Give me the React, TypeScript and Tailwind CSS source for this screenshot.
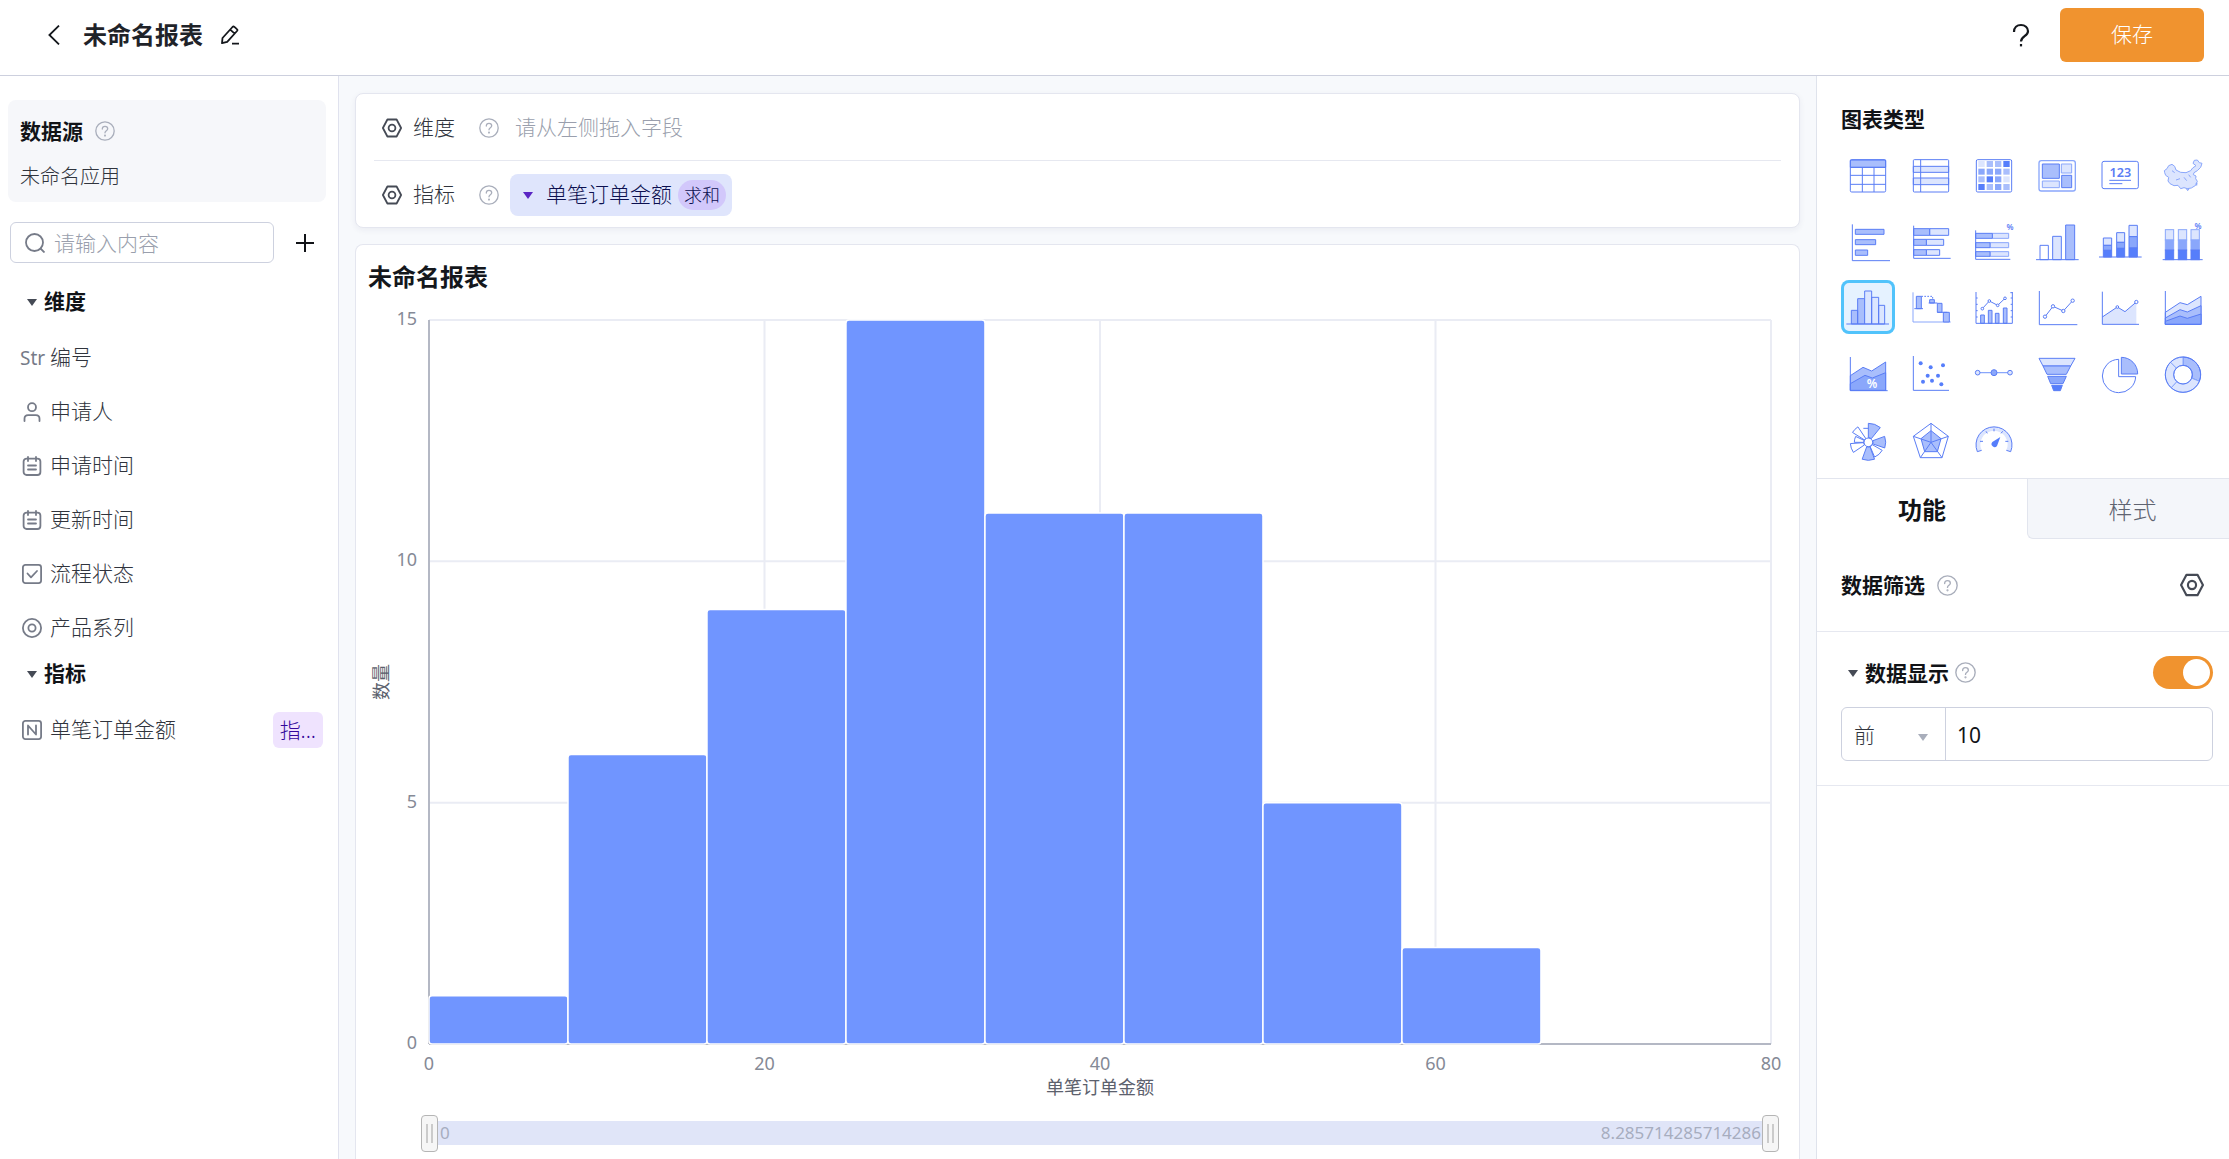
import { useState } from "react";
import type { ReactNode } from "react";
import clsx from "clsx";

const BLUE = "#5a7df5"
const PALE = "#dce5fe"
const SOFT = "#a9befc"
const MID = "#8aa7fb"
const DEEP = "#567efb"

function Caret({ className }: { className?: string }) {
    return (
        <svg viewBox="0 0 10 7" className={clsx("h-[7px] w-2.5 shrink-0", className)} fill="currentColor">
            <path d="M0 0h10L5 7z" />
        </svg>
    )
}

function HelpIcon({ className = "size-5" }: { className?: string }) {
    return (
        <svg viewBox="0 0 20 20" className={clsx("shrink-0 text-[#a9aebb]", className)} fill="none" stroke="currentColor" strokeWidth="1.3" strokeLinecap="round">
            <circle cx="10" cy="10" r="9.2" />
            <path d="M7.3 8.1c0-1.7 1.2-2.8 2.7-2.8s2.7 1.1 2.7 2.5c0 1.9-2.7 2-2.7 4" />
            <circle cx="10" cy="14.6" r=".4" fill="currentColor" />
        </svg>
    )
}

function HexIcon({ className = "size-5" }: { className?: string }) {
    return (
        <svg viewBox="0 0 20 20" className={clsx("shrink-0 text-[#454a55]", className)} fill="none" stroke="currentColor" strokeWidth="1.8" strokeLinejoin="round">
            <path d="M5.4 1.5h9.2l4.5 8.5-4.5 8.5H5.4L.9 10z" />
            <circle cx="10" cy="10" r="3.4" />
        </svg>
    )
}

function FieldIcon({ type }: { type: string }) {
    return (
        <svg viewBox="0 0 20 20" className="size-5 shrink-0 text-[#767b88]" fill="none" stroke="currentColor" strokeWidth="1.8" strokeLinecap="round" strokeLinejoin="round">
            {type === "user" && (
                <>
                    <circle cx="10" cy="5.2" r="4" />
                    <path d="M2.5 19v-2.2c0-2 1.5-3.6 3.6-3.6h7.8c2.1 0 3.6 1.6 3.6 3.6V19" />
                </>
            )}
            {type === "date" && (
                <>
                    <rect x="1.6" y="2.6" width="16.8" height="16.4" rx="3" />
                    <path d="M6 1v4M14 1v4M6 9.5h8M6 13.5h8" />
                </>
            )}
            {type === "check" && (
                <>
                    <rect x=".9" y=".9" width="18.2" height="18.2" rx="2.5" />
                    <path d="M5.5 9.5l3.5 3.8 6-6.3" />
                </>
            )}
            {type === "radio" && (
                <>
                    <circle cx="10" cy="10" r="9.1" />
                    <circle cx="10" cy="10" r="3.6" />
                </>
            )}
            {type === "number" && (
                <>
                    <rect x=".9" y=".9" width="18.2" height="18.2" rx="2.5" />
                    <path d="M6 14.5V5.5l8 9v-9" />
                </>
            )}
        </svg>
    )
}

// polar wedge, degrees clockwise from the top
function wedge(cx: number, cy: number, r0: number, r1: number, from: number, to: number) {
    const point = (r: number, deg: number) => {
        const a = ((deg - 90) * Math.PI) / 180
        return `${(cx + r * Math.cos(a)).toFixed(1)} ${(cy + r * Math.sin(a)).toFixed(1)}`
    }
    const large = to - from > 180 ? 1 : 0
    return `M${point(r0, from)}L${point(r1, from)}A${r1} ${r1} 0 ${large} 1 ${point(r1, to)}L${point(r0, to)}A${r0} ${r0} 0 ${large} 0 ${point(r0, from)}Z`
}

const heat = [
    [PALE, SOFT, SOFT, DEEP],
    [MID, MID, MID, SOFT],
    [SOFT, DEEP, MID, PALE],
    [DEEP, SOFT, MID, SOFT],
]

const chartTypes: { name: string; icon: ReactNode }[] = [
    {
        name: "明细表",
        icon: (
            <>
                <path d="M28 36h106v22H28z" fill={SOFT} />
                <rect x="28" y="35" width="106" height="97" rx="4" />
                <path d="M28 58h106M28 82h106M28 109h106M64 58v74M99 58v74" />
            </>
        ),
    },
    {
        name: "透视表",
        icon: (
            <>
                <path d="M28 55h106v18H28zM28 90h106v20H28z" fill={PALE} />
                <rect x="28" y="35" width="106" height="97" rx="3" />
                <path d="M50 35v97" />
            </>
        ),
    },
    {
        name: "热力图",
        icon: (
            <>
                <rect x="28" y="35" width="106" height="97" rx="4" />
                {heat.map((row, r) =>
                    row.map((fill, c) => (
                        <rect key={`${r}-${c}`} x={34 + c * 25} y={39 + r * 23} width="19" height="18" fill={fill} stroke="none" />
                    ))
                )}
            </>
        ),
    },
    {
        name: "矩形树图",
        icon: (
            <>
                <rect x="27" y="38" width="109" height="91" rx="7" stroke={MID} strokeWidth="4" />
                <path d="M37 48h51v43H37zM95 82h30v37H95z" fill={SOFT} />
                <path d="M94 48h31v27H94zM37 99h51v20H37z" fill={PALE} stroke={MID} />
            </>
        ),
    },
    {
        name: "指标卡",
        icon: (
            <>
                <rect x="27" y="40" width="109" height="82" rx="6" />
                <text x="82" y="88" textAnchor="middle" fontSize="38" fontWeight="600" fill={BLUE} stroke="none">123</text>
                <path d="M49 97h65M49 107h39" />
            </>
        ),
    },
    {
        name: "地图",
        icon: (
            <>
                <path
                    d="M25 68L33 62L38 53L48 49L56 55L60 66L74 73L90 74L104 68L110 60L120 53L111 46L115 37L124 36L130 44L138 46L134 58L124 68L114 74L112 80L120 84L119 92L124 100L119 112L106 120L94 122L84 119L74 122L66 112L54 113L42 107L36 99L38 88L29 82L26 74Z"
                    fill={PALE}
                    stroke={MID}
                />
                <path d="M92 123l3 5 4-5zM120 106l2 6 1-7zM48 68l8 6M60 96l12-4M84 88l8 10M98 80l6 8" stroke={MID} />
            </>
        ),
    },
    {
        name: "条形图",
        icon: (
            <>
                <path d="M43 46h86v15H43zM43 77h61v15H43zM43 108h37v16H43z" fill={SOFT} />
                <path d="M34 31v109h113" />
            </>
        ),
    },
    {
        name: "堆积条形图",
        icon: (
            <>
                <path d="M77 44h57v20H77zM67 76h52v18H67zM67 107h40v17H67z" fill={PALE} />
                <path d="M29 44h48v20H29zM29 76h38v18H29zM29 107h38v17H29z" fill={SOFT} />
                <path d="M29 35v98h111" />
            </>
        ),
    },
    {
        name: "百分比条形图",
        icon: (
            <>
                <path d="M76 58h49v15H76zM69 86h56v15H69zM69 113h56v14H69z" fill={PALE} stroke={MID} />
                <path d="M26 58h50v15H26zM26 86h43v15H26zM26 113h43v14H26z" fill={SOFT} />
                <path d="M26 49v87h104" />
                <text x="129" y="47" textAnchor="middle" fontSize="24" fontWeight="600" fill={BLUE} stroke="none">%</text>
            </>
        ),
    },
    {
        name: "柱状图",
        icon: (
            <>
                <path d="M30 94h25v43H30z" />
                <path d="M68 67h26v70H68z" fill={PALE} />
                <path d="M107 33h27v104h-27z" fill={SOFT} />
                <path d="M18 137h128" />
            </>
        ),
    },
    {
        name: "堆积柱状图",
        icon: (
            <>
                <path d="M31 72h25v22H31zM71 56h24v29H71zM108 34h25v34h-25z" fill={PALE} />
                <path d="M31 94h25v15H31zM71 85h24v18H71zM108 68h25v34h-25z" fill={MID} />
                <path d="M31 109h25v20H31zM71 103h24v26H71zM108 102h25v27h-25z" fill={DEEP} />
                <path d="M18 129h128" />
            </>
        ),
    },
    {
        name: "百分比柱状图",
        icon: (
            <>
                {[28, 67, 105].map((x) => (
                    <g key={x}>
                        <rect x={x} y="47" width="25" height="31" fill={PALE} stroke={MID} />
                        <rect x={x} y="78" width="25" height="30" fill={MID} stroke={MID} />
                        <rect x={x} y="108" width="25" height="29" fill={DEEP} />
                    </g>
                ))}
                <path d="M20 137h120" />
                <text x="126" y="45" textAnchor="middle" fontSize="24" fontWeight="600" fill={BLUE} stroke="none">%</text>
            </>
        ),
    },
    {
        name: "直方图",
        icon: (
            <>
                <path d="M31 91h19v41H31zM50 56h21v76H50z" fill={SOFT} />
                <path d="M71 33h21v99H71zM92 52h21v80H92zM113 76h18v56h-18z" fill="#dbe6ff" />
                <path d="M16 132h128" />
            </>
        ),
    },
    {
        name: "瀑布图",
        icon: (
            <>
                <path d="M27 37v89h113" stroke={MID} />
                <path d="M37 49h15v37H37zM77 59h14v10H77zM100 70h14v27h-14zM118 97h18v29h-18z" fill={SOFT} />
                <path d="M31 86h26M74 69h26M100 97h30" />
                <path d="M52 49h34v10" strokeDasharray="5 4" />
            </>
        ),
    },
    {
        name: "双轴图",
        icon: (
            <>
                <path d="M41 105h11v25H41zM64 91h11v39H64zM85 100h11v30H85zM109 84h11v46h-11z" fill={SOFT} />
                <path d="M27 36v94h109V36M27 54h5M27 73h5M27 92h5M27 111h5M136 38h-6M136 54h-5M136 73h-5M136 92h-5M136 111h-5" />
                <path d="M46 86l21-23 25 13 22-21" />
                <g fill="white">
                    <circle cx="46" cy="86" r="4" />
                    <circle cx="67" cy="63" r="4" />
                    <circle cx="92" cy="76" r="4" />
                    <circle cx="114" cy="55" r="4" />
                </g>
            </>
        ),
    },
    {
        name: "折线图",
        icon: (
            <>
                <path d="M28 33v101h114M45 110l24-31 31 14 28-31" />
                <g fill="white">
                    <circle cx="45" cy="110" r="5" />
                    <circle cx="69" cy="79" r="5" />
                    <circle cx="100" cy="93" r="5" />
                    <circle cx="128" cy="62" r="5" />
                </g>
            </>
        ),
    },
    {
        name: "面积图",
        icon: (
            <>
                <path d="M28 111l45-30 23 14 34-29v67H28z" fill={PALE} stroke="none" />
                <path d="M28 35v98h110M28 111l45-30 23 14 34-29" />
                <circle cx="73" cy="81" r="4" fill="white" />
                <circle cx="130" cy="66" r="5" fill="white" />
            </>
        ),
    },
    {
        name: "堆积面积图",
        icon: (
            <>
                <path d="M28 97l44-29 22 6 41-25v84H28z" fill={PALE} />
                <path d="M28 114l44-25 22 7 41-19v56H28z" fill={SOFT} />
                <path d="M28 124l44-16 22 7 41-13v31H28z" fill={MID} />
                <path d="M28 33v100h108" />
            </>
        ),
    },
    {
        name: "百分比面积图",
        icon: (
            <>
                <path d="M28 89l38-25 26 11 42-27v85H28z" fill={SOFT} />
                <path d="M28 113l44-25 22 8 40-16v53H28z" fill={MID} />
                <path d="M28 33v101h112" />
                <text x="93" y="125" textAnchor="middle" fontSize="36" fontWeight="600" fill="white" stroke="none">%</text>
            </>
        ),
    },
    {
        name: "散点图",
        icon: (
            <>
                <path d="M28 30v103h107" />
                {[[50, 52], [80, 64], [117, 58], [71, 89], [102, 89], [57, 107], [84, 104], [112, 115]].map(([x, y]) => (
                    <circle key={`${x}-${y}`} cx={x} cy={y} r="6" fill={DEEP} stroke="none" />
                ))}
            </>
        ),
    },
    {
        name: "时间轴",
        icon: (
            <>
                <path d="M32 80h97" stroke={MID} strokeWidth="4" />
                <circle cx="32" cy="80" r="7" fill={PALE} />
                <circle cx="81" cy="80" r="9" fill={MID} />
                <circle cx="129" cy="80" r="7" fill={PALE} />
            </>
        ),
    },
    {
        name: "漏斗图",
        icon: (
            <>
                <path d="M27 37h108l-13 23H39z" fill={PALE} />
                <path d="M39 60h83l-13 25H51z" fill={SOFT} />
                <path d="M53 91h56l-10 22H62z" fill={MID} />
                <path d="M65 118h32l-6 16H71z" fill={DEEP} />
            </>
        ),
    },
    {
        name: "饼图",
        icon: (
            <>
                <path d="M77 40a50 50 0 1 0 51 52H77z" />
                <path d="M85 34a49 49 0 0 1 49 50H85z" fill={SOFT} />
            </>
        ),
    },
    {
        name: "环形图",
        icon: (
            <>
                <path d={wedge(81, 86, 28, 53, 0, 112)} fill={SOFT} />
                <path d={wedge(81, 86, 28, 53, 112, 222)} fill={PALE} stroke={MID} />
                <path d={wedge(81, 86, 28, 53, 222, 315)} fill={PALE} stroke={MID} />
                <path d={wedge(81, 86, 28, 53, 315, 360)} fill={PALE} stroke={MID} />
                <circle cx="81" cy="86" r="53" />
                <circle cx="81" cy="86" r="28" />
            </>
        ),
    },
    {
        name: "玫瑰图",
        icon: (
            <>
                <path d={wedge(82, 91, 14, 57, 0, 39)} fill={SOFT} />
                <path d={wedge(82, 91, 14, 52, 70, 109)} fill={SOFT} />
                <path d={wedge(82, 91, 14, 48, 120, 157)} />
                <path d={wedge(82, 91, 14, 54, 160, 200)} fill={SOFT} />
                <path d={wedge(82, 91, 14, 54, 236, 266)} />
                <path d={wedge(82, 91, 14, 42, 270, 295)} />
                <path d={wedge(82, 91, 14, 56, 302, 326)} />
                <path d="M82 49H67" />
                <circle cx="82" cy="91" r="13" />
            </>
        ),
    },
    {
        name: "雷达图",
        icon: (
            <>
                <path d="M81 34l52 39-19 64H49L28 73z" />
                <path d="M81 56l30 24-11 39H62L51 80z" fill={SOFT} />
                <path d="M81 34v57l52-18M81 91l33 46M81 91l-32 46M81 91L28 73" />
            </>
        ),
    },
    {
        name: "仪表盘",
        icon: (
            <>
                <path d="M31 119a54 54 0 1 1 100 0l-13-4a41 41 0 1 0-74 0z" fill={PALE} stroke="none" />
                <path d="M44 115l-13 4a54 54 0 1 1 100 0l-13-4" />
                <path d="M81 50v8M57 58l4 6M107 58l-5 6M39 88h9M115 88h9" />
                <path d="M100 75l-10 27a9 9 0 1 1-14-12z" fill={DEEP} stroke="none" />
            </>
        ),
    },
]

const dimensions = [
    { type: "user", label: "申请人" },
    { type: "date", label: "申请时间" },
    { type: "date", label: "更新时间" },
    { type: "check", label: "流程状态" },
    { type: "radio", label: "产品系列" },
]

const counts = [1, 6, 9, 15, 11, 11, 5, 2]
const BIN = 8.285714285714286
const X_MAX = 80
const Y_MAX = 15

function Header() {
    return (
        <header className="flex h-[76px] shrink-0 items-center border-b border-[#cdd0de] bg-white pr-[25px] pb-1.5 pl-12">
            <button aria-label="返回" className="text-[#14171c]">
                <svg viewBox="0 0 12 20" className="h-5 w-3" fill="none" stroke="currentColor" strokeWidth="1.8">
                    <path d="M11 .6L1.4 10l9.6 9.4" />
                </svg>
            </button>
            <h1 className="ml-[23px] text-2xl font-bold text-[#1f2329]">未命名报表</h1>
            <button aria-label="编辑名称" className="ml-[17px] text-[#14171c]">
                <svg viewBox="0 0 20 20" className="size-5" fill="none" stroke="currentColor" strokeWidth="1.8" strokeLinejoin="round">
                    <path d="M2 18.2l.5-5.2L12.5 2c.6-.6 1.3-.6 1.9-.1l2.5 2.2c.6.5.6 1.3.1 1.9L7.2 16.8zM10.2 4.6l4.5 4M12 18.6h7" />
                </svg>
            </button>
            <button aria-label="帮助" className="ml-auto text-[#14171c]">
                <svg viewBox="0 0 18 24" className="h-6 w-[18px]" fill="none" stroke="currentColor" strokeWidth="2.2">
                    <path d="M2 9c0-4.4 3-7 7-7s7 2.6 7 6.2c0 4.8-7 5.2-7 10.3" />
                    <path d="M9 21v2.4" />
                </svg>
            </button>
            <button className="ml-[30px] h-[54px] w-36 rounded-md bg-[#f0932f] text-[21px] text-white">保存</button>
        </header>
    )
}

function FieldPanel() {
    return (
        <aside className="flex w-[339px] shrink-0 flex-col border-r border-[#e0e2ee] bg-white">
            <div className="mt-6 mr-3 ml-2 h-[102px] rounded-lg bg-[#f6f7fa] px-3 pt-[15px]">
                <div className="flex items-center gap-3">
                    <h2 className="text-[21px] leading-8 font-bold">数据源</h2>
                    <HelpIcon />
                </div>
                <p className="mt-3.5 text-[20px] leading-8 text-[#30343d]">未命名应用</p>
            </div>
            <div className="mt-5 flex items-center pr-6 pl-2.5">
                <label className="flex h-[41px] flex-1 items-center rounded-md border border-[#cdd1df] pl-3.5">
                    <svg viewBox="0 0 20 20" className="size-5 text-[#767b88]" fill="none" stroke="currentColor" strokeWidth="1.8">
                        <circle cx="9.5" cy="9.5" r="8.5" />
                        <path d="M15.5 15.5l4 4" />
                    </svg>
                    <input aria-label="搜索字段" placeholder="请输入内容" className="ml-[9px] w-0 flex-1 text-[21px] leading-8 outline-none placeholder:text-[#9a9fad]" />
                </label>
                <button aria-label="新增字段" className="ml-[22px]">
                    <svg viewBox="0 0 18 18" className="size-[18px]" stroke="currentColor" strokeWidth="2">
                        <path d="M9 0v18M0 9h18" />
                    </svg>
                </button>
            </div>
            <h3 className="mt-[23px]">
                <button className="flex h-8 items-center gap-[7px] pl-[27px] text-[21px] font-bold">
                    <Caret className="text-[#454a55]" />
                    维度
                </button>
            </h3>
            <ul className="mt-[13px] text-[21px] text-[#30343d]">
                <li className="flex h-[54px] items-center pl-5">
                    <span className="w-[30px] text-[19px] font-normal text-[#767b88]">Str</span>
                    编号
                </li>
                {dimensions.map((field) => (
                    <li key={field.label} className="flex h-[54px] items-center gap-2 pl-[22px]">
                        <FieldIcon type={field.type} />
                        {field.label}
                    </li>
                ))}
            </ul>
            <h3 className="mt-[3px]">
                <button className="flex h-8 items-center gap-[7px] pl-[27px] text-[21px] font-bold">
                    <Caret className="text-[#454a55]" />
                    指标
                </button>
            </h3>
            <ul className="mt-[13px] text-[21px] text-[#30343d]">
                <li className="flex h-[54px] items-center gap-2 pr-[15px] pl-[22px]">
                    <FieldIcon type="number" />
                    单笔订单金额
                    <span className="ml-auto rounded-md bg-[#efe3fe] px-[7px] text-[21px] leading-9 text-[#33089c]">指...</span>
                </li>
            </ul>
        </aside>
    )
}

function DropRow({ label, children }: { label: string; children: ReactNode }) {
    return (
        <div className="flex h-[66px] items-center pt-0.5 pl-2">
            <HexIcon />
            <span className="ml-[11px] text-[21px] text-[#30343d]">{label}</span>
            <HelpIcon className="ml-6 size-5" />
            {children}
        </div>
    )
}

function Histogram() {
    return (
        <svg className="block h-[724px] w-full overflow-visible">
            {[5, 10, 15].map((v) => (
                <line key={v} x1="0" x2="100%" y1={`${100 - (v / Y_MAX) * 100}%`} y2={`${100 - (v / Y_MAX) * 100}%`} stroke="#eaecf4" strokeWidth="2" />
            ))}
            {[20, 40, 60, 80].map((v) => (
                <line key={v} x1={`${(v / X_MAX) * 100}%`} x2={`${(v / X_MAX) * 100}%`} y1="0" y2="100%" stroke="#eaecf4" strokeWidth="2" />
            ))}
            <line x1="0" x2="0" y1="0" y2="100%" stroke="#b4b8c4" strokeWidth="2" />
            <line x1="0" x2="100%" y1="100%" y2="100%" stroke="#b4b8c4" strokeWidth="2" />
            {counts.map((n, i) => (
                <rect
                    key={i}
                    x={`${((i * BIN) / X_MAX) * 100}%`}
                    y={`${100 - (n / Y_MAX) * 100}%`}
                    width={`${(BIN / X_MAX) * 100}%`}
                    height={`${(n / Y_MAX) * 100}%`}
                    rx="3"
                    fill="#7095ff"
                    stroke="white"
                    strokeWidth="1.5"
                />
            ))}
            <g fontSize="18" fontWeight="400" fill="#858a96">
                {[0, 5, 10, 15].map((v) => (
                    <text key={v} x="-12" y={`${100 - (v / Y_MAX) * 100}%`} dy="5" textAnchor="end">{v}</text>
                ))}
                {[0, 20, 40, 60, 80].map((v) => (
                    <text key={v} x={`${(v / X_MAX) * 100}%`} y="100%" dy="26" textAnchor="middle">{v}</text>
                ))}
            </g>
            <g fontSize="18" fontWeight="400" fill="#5c616d">
                <text x="50%" y="100%" dy="50" textAnchor="middle">单笔订单金额</text>
                <text x="-362" y="-41" transform="rotate(-90)" textAnchor="middle">数量</text>
            </g>
        </svg>
    )
}

function RangeHandle({ label, value, onChange }: { label: string; value: number; onChange: (v: number) => void }) {
    return (
        <input
            type="range"
            aria-label={label}
            min={0}
            max={100}
            value={value}
            onChange={(e) => onChange(Number(e.target.value))}
            className="pointer-events-none absolute -inset-x-2 -top-1.5 h-[37px] appearance-none bg-transparent [&::-webkit-slider-thumb]:pointer-events-auto [&::-webkit-slider-thumb]:h-[37px] [&::-webkit-slider-thumb]:w-[17px] [&::-webkit-slider-thumb]:appearance-none [&::-webkit-slider-thumb]:rounded [&::-webkit-slider-thumb]:border [&::-webkit-slider-thumb]:border-[#b5b5b5] [&::-webkit-slider-thumb]:bg-[#f6f6f6] [&::-webkit-slider-thumb]:bg-[linear-gradient(90deg,transparent_4px,#cbcbcb_4px,#cbcbcb_6px,transparent_6px,transparent_9px,#cbcbcb_9px,#cbcbcb_11px,transparent_11px)] [&::-webkit-slider-thumb]:bg-[length:100%_19px] [&::-webkit-slider-thumb]:bg-center [&::-webkit-slider-thumb]:bg-no-repeat"
        />
    )
}

function DataZoom() {
    const [start, setStart] = useState(0)
    const [end, setEnd] = useState(100)
    return (
        <div className="relative mt-[77px] flex h-6 items-center justify-between bg-[#e0e5f8] pr-2.5 pl-[11px] text-[17px] font-normal text-[#a7adbf]">
            <span>0</span>
            <span>{BIN}</span>
            <RangeHandle label="起始" value={start} onChange={setStart} />
            <RangeHandle label="结束" value={end} onChange={setEnd} />
        </div>
    )
}

function Workspace() {
    return (
        <main className="flex min-w-0 flex-1 flex-col gap-4 overflow-hidden bg-[#f7f9fc] px-4 pt-[17px]">
            <section className="shrink-0 rounded-lg border border-[#e4e6ef] bg-white px-[18px] shadow-[0_2px_6px_rgba(30,40,80,0.06)]">
                <DropRow label="维度">
                    <span className="ml-4 text-[21px] text-[#9a9fad]">请从左侧拖入字段</span>
                </DropRow>
                <hr className="border-[#e6e8f0]" />
                <DropRow label="指标">
                    <button className="ml-[11px] flex h-[42px] items-center rounded-lg bg-[#dfe5fc] pr-1.5 pl-[13px] text-[#0c1050]">
                        <Caret className="text-[#5a25c4]" />
                        <span className="ml-[13px] text-[21px]">单笔订单金额</span>
                        <span className="ml-1.5 rounded-full bg-[#d2c8fb] px-1.5 text-lg leading-[30px]">求和</span>
                    </button>
                </DropRow>
            </section>
            <section className="flex-1 shrink-0 rounded-t-lg border border-b-0 border-[#e4e6ef] bg-white pr-7 pb-6 pl-[73px]">
                <h2 className="mt-4 mb-[27px] -ml-[61px] text-2xl font-bold text-[#14171c]">未命名报表</h2>
                <Histogram />
                <DataZoom />
            </section>
        </main>
    )
}

function SettingsPanel() {
    const [selected, setSelected] = useState("直方图")
    const [showData, setShowData] = useState(true)
    return (
        <aside className="w-[413px] shrink-0 border-l border-[#dfe3ec] bg-white">
            <div className="px-6">
                <h2 className="pt-[27px] text-[21px] leading-8 font-bold">图表类型</h2>
                <div className="mt-[13px] -mr-3.5 grid grid-cols-6 gap-y-3 pb-3">
                    {chartTypes.map((chart) => (
                        <button
                            key={chart.name}
                            aria-label={chart.name}
                            aria-pressed={chart.name === selected}
                            onClick={() => setSelected(chart.name)}
                            className={clsx(
                                "size-[54px] rounded-lg",
                                chart.name === selected && "bg-[#e5f2ff] ring-3 ring-[#51c3fb] ring-inset"
                            )}
                        >
                            <svg viewBox="0 0 162 162" className="size-full" fill="none" stroke={BLUE} strokeWidth="3">
                                {chart.icon}
                            </svg>
                        </button>
                    ))}
                </div>
            </div>
            <div role="tablist" className="flex h-[61px] border-t border-[#e2e5ee] text-2xl">
                <button role="tab" aria-selected className="w-[210px] pt-0.5 font-bold">功能</button>
                <button role="tab" aria-selected={false} className="flex-1 rounded-bl-md border-b border-l border-[#e2e5ee] bg-[#f4f6fa] pt-0.5 pl-2 text-[#5f6471]">样式</button>
            </div>
            <div className="flex h-[93px] items-center border-b border-[#e6e8f0] pr-[25px] pl-6">
                <h3 className="pt-0.5 text-[21px] font-bold">数据筛选</h3>
                <HelpIcon className="ml-3 size-[21px]" />
                <button aria-label="筛选设置" className="ml-auto">
                    <HexIcon className="size-6" />
                </button>
            </div>
            <div className="h-[154px] border-b border-[#e6e8f0] pt-6 pr-4 pl-6">
                <div className="flex h-[33px] items-center">
                    <button className="flex items-center gap-[7px] pt-0.5 pl-[7px] text-[21px] font-bold">
                        <Caret className="text-[#454a55]" />
                        数据显示
                    </button>
                    <HelpIcon className="ml-1.5 size-[21px]" />
                    <input
                        type="checkbox"
                        role="switch"
                        aria-label="数据显示"
                        checked={showData}
                        onChange={(e) => setShowData(e.target.checked)}
                        className="ml-auto h-[33px] w-[60px] appearance-none rounded-full bg-[#c9cdd6] p-[3px] before:block before:size-[27px] before:rounded-full before:bg-white checked:bg-[#f0932f] checked:before:ml-[27px]"
                    />
                </div>
                <div className="mt-[18px] flex h-[54px] rounded-md border border-[#cdd1df] text-[21px]">
                    <div className="relative w-[104px] border-r border-[#cdd1df]">
                        <select aria-label="显示方向" className="size-full appearance-none pt-1 pl-3 text-[#30343d] outline-none">
                            <option>前</option>
                            <option>后</option>
                        </select>
                        <Caret className="pointer-events-none absolute top-[26px] right-[17px] text-[#a9aebb]" />
                    </div>
                    <input aria-label="显示数量" defaultValue="10" className="w-0 flex-1 rounded-r-md px-[11px] pt-1 font-normal outline-none" />
                </div>
            </div>
        </aside>
    )
}

export default function App() {
    return (
        <div className="flex h-screen flex-col overflow-hidden bg-white font-['Noto_Sans','Noto_Sans_CJK_SC',sans-serif] font-light text-[#111317]">
            <Header />
            <div className="flex min-h-0 flex-1">
                <FieldPanel />
                <Workspace />
                <SettingsPanel />
            </div>
        </div>
    )
}
